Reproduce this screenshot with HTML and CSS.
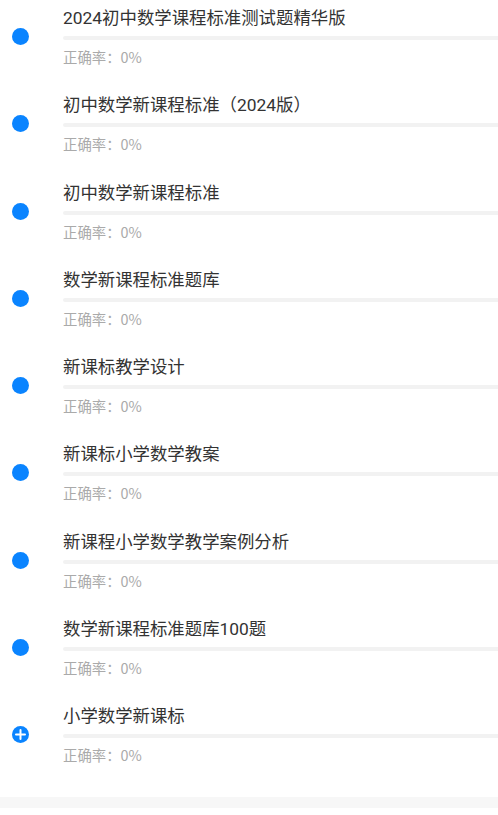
FILE: index.html
```html
<!DOCTYPE html>
<html lang="zh">
<head>
<meta charset="utf-8">
<link rel="stylesheet" href="styles.css">
</head>
<body>
<div class="list">
  <div class="item"><span class="dot"></span><div class="body"><div class="title">2024初中数学课程标准测试题精华版</div><div class="bar"></div><div class="rate">正确率：0%</div></div></div>
  <div class="item"><span class="dot"></span><div class="body"><div class="title">初中数学新课程标准（2024版）</div><div class="bar"></div><div class="rate">正确率：0%</div></div></div>
  <div class="item"><span class="dot"></span><div class="body"><div class="title">初中数学新课程标准</div><div class="bar"></div><div class="rate">正确率：0%</div></div></div>
  <div class="item"><span class="dot"></span><div class="body"><div class="title">数学新课程标准题库</div><div class="bar"></div><div class="rate">正确率：0%</div></div></div>
  <div class="item"><span class="dot"></span><div class="body"><div class="title">新课标教学设计</div><div class="bar"></div><div class="rate">正确率：0%</div></div></div>
  <div class="item"><span class="dot"></span><div class="body"><div class="title">新课标小学数学教案</div><div class="bar"></div><div class="rate">正确率：0%</div></div></div>
  <div class="item"><span class="dot"></span><div class="body"><div class="title">新课程小学数学教学案例分析</div><div class="bar"></div><div class="rate">正确率：0%</div></div></div>
  <div class="item"><span class="dot"></span><div class="body"><div class="title">数学新课程标准题库100题</div><div class="bar"></div><div class="rate">正确率：0%</div></div></div>
  <div class="item"><span class="dot plus"><svg viewBox="0 0 17 17" width="17" height="17"><path d="M8.5 4v9M4 8.5h9" stroke="#fff" stroke-width="2" stroke-linecap="round"/></svg></span><div class="body"><div class="title">小学数学新课标</div><div class="bar"></div><div class="rate">正确率：0%</div></div></div>
</div>
<div class="band"></div>
</body>
</html>
```
FILE: styles.css
```css
html, body {
  margin: 0;
  padding: 0;
  background: #fff;
  font-family: Roboto, "Noto Sans CJK SC", sans-serif;
}
.list {
  padding-bottom: 12px;
}
.item {
  display: flex;
  height: 87.25px;
  box-sizing: border-box;
}
.dot {
  flex: none;
  width: 17px;
  height: 17px;
  border-radius: 50%;
  background: #0a84ff;
  margin: 28px 0 0 12px;
  display: flex;
}
.body {
  flex: 1;
  margin-left: 34px;
  padding-top: 6px;
}
.title {
  font-size: 17.4px;
  line-height: 24px;
  height: 24px;
  color: #333;
  white-space: nowrap;
}
.bar {
  height: 4px;
  margin-top: 6px;
  background: #f2f2f2;
  border-radius: 2px 0 0 2px;
}
.rate {
  margin-top: 7px;
  font-family: "Noto Sans CJK SC", sans-serif;
  font-size: 14.4px;
  line-height: 20px;
  color: #aaa;
}
.band {
  height: 11px;
  background: #f7f7f7;
}
```
